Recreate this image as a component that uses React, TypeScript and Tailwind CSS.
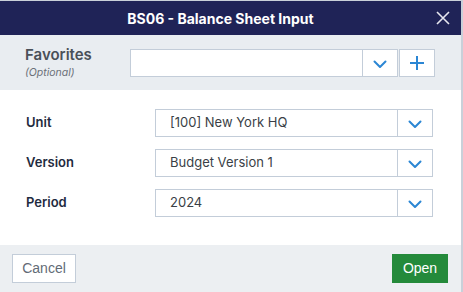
import React from "react";

const Chevron = () => (
  <svg width="14" height="9" viewBox="0 0 14 9" fill="none">
    <path d="M1.5 1.5 L7 7 L12.5 1.5" stroke="#2b86d4" strokeWidth="2" strokeLinecap="round" strokeLinejoin="round" />
  </svg>
);

const Plus = () => (
  <svg width="16" height="16" viewBox="0 0 16 16" fill="none">
    <path d="M8 1 V15 M1 8 H15" stroke="#2b86d4" strokeWidth="2" />
  </svg>
);

const Select = ({ value }: { value: string }) => (
  <div className="flex h-[28px] w-[278px] border border-[#c3cdd9] bg-white">
    <div className="flex flex-1 items-center pl-[14px] text-[13px] text-[#3a3f46]">{value}</div>
    <div className="flex w-[35px] items-center justify-center border-l border-[#c3cdd9] pt-[3px]">
      <Chevron />
    </div>
  </div>
);

const Row = ({ label, value }: { label: string; value: string }) => (
  <div className="flex items-center">
    <div className="w-[155px] pl-[26px] text-[13px] font-semibold text-[#1f2b40]">{label}</div>
    <Select value={value} />
  </div>
);

export default function App() {
  return (
    <div
      className="relative flex h-[292px] w-[463px] flex-col border-t border-r-2 border-[#c9d0d9] bg-white"
      style={{ fontFamily: "Inter, 'Noto Sans', sans-serif" }}
    >
      <div className="relative flex h-[34px] items-center bg-[#1f2357]">
        <div className="flex-1 pr-[20px] text-center text-[14px] font-bold text-white">
          BS06 - Balance Sheet Input
        </div>
        <button className="absolute right-[11px] top-[10px]">
          <svg width="14" height="14" viewBox="0 0 14 14" fill="none">
            <path d="M1 1 L13 13 M13 1 L1 13" stroke="#e6e7ef" strokeWidth="1.6" />
          </svg>
        </button>
      </div>

      <div className="flex h-[55px] items-center bg-[#e9edf1]">
        <div className="w-[130px] pl-[25px]">
          <div className="text-[15px] font-semibold leading-[20px] text-[#4a5058]">Favorites</div>
          <div className="text-[10.5px] italic leading-[16px] text-[#6b7078]">(Optional)</div>
        </div>
        <div className="flex items-center gap-[1px]">
          <div className="flex h-[28px] w-[268px] border border-[#c3cdd9] bg-white">
            <div className="flex-1" />
            <div className="flex w-[35px] items-center justify-center border-l border-[#c3cdd9] pt-[3px]">
              <Chevron />
            </div>
          </div>
          <div className="flex h-[28px] w-[36px] items-center justify-center border border-[#c3cdd9] bg-white">
            <Plus />
          </div>
        </div>
      </div>

      <div className="flex flex-1 flex-col gap-[12px] pt-[19px]">
        <Row label="Unit" value="[100] New York HQ" />
        <Row label="Version" value="Budget Version 1" />
        <Row label="Period" value="2024" />
      </div>

      <div
        className="flex h-[47px] items-center justify-between bg-[#eceff2] pl-[12px] pr-[13px]"
        style={{ fontFamily: "'Liberation Sans', Arial, sans-serif" }}
      >
        <button className="h-[29px] w-[64px] border border-[#c3cdd9] bg-white text-[14px] text-[#636b76]">
          Cancel
        </button>
        <button className="h-[29px] w-[56px] bg-[#248a3b] text-[14px] text-white">Open</button>
      </div>
    </div>
  );
}
